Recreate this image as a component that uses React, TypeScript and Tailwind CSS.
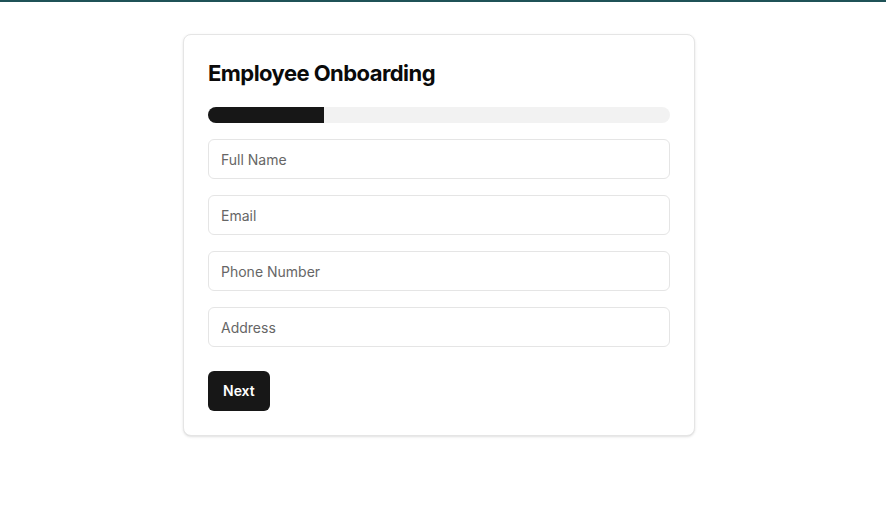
import React, { useState } from 'react';

const fields = ['Full Name', 'Email', 'Phone Number', 'Address'];

export default function App() {
  const [values, setValues] = useState<{ [key: string]: string }>({});
  const step = 1;
  const totalSteps = 4;

  return (
    <div className="min-h-screen bg-white font-['Inter',sans-serif] text-[#0a0a0a]">
      <div className="h-[2px] w-full bg-[#1f5257]" />
      <div className="pt-8 pr-2 flex justify-center">
        <div className="w-[512px] rounded-lg border border-[#e5e5e5] bg-white p-6 shadow-sm">
          <h1 className="text-[22px] leading-7 font-bold tracking-tight mb-5">Employee Onboarding</h1>

          {/* Progress */}
          <div className="h-4 w-full rounded-full bg-[#f2f2f2] overflow-hidden mb-4">
            <div className="h-full bg-[#171717]" style={{ width: `${(step / totalSteps) * 100}%` }} />
          </div>

          <div className="flex flex-col gap-4">
            {fields.map((f) => (
              <input
                key={f}
                placeholder={f}
                value={values[f] || ''}
                onChange={(e) => setValues({ ...values, [f]: e.target.value })}
                className="h-10 w-full rounded-md border border-[#e5e5e5] px-3 text-sm placeholder:text-[#666666] outline-none"
              />
            ))}
          </div>

          <button className="mt-6 h-10 rounded-md bg-[#171717] px-[15px] text-sm font-semibold text-white">
            Next
          </button>
        </div>
      </div>
    </div>
  );
}
